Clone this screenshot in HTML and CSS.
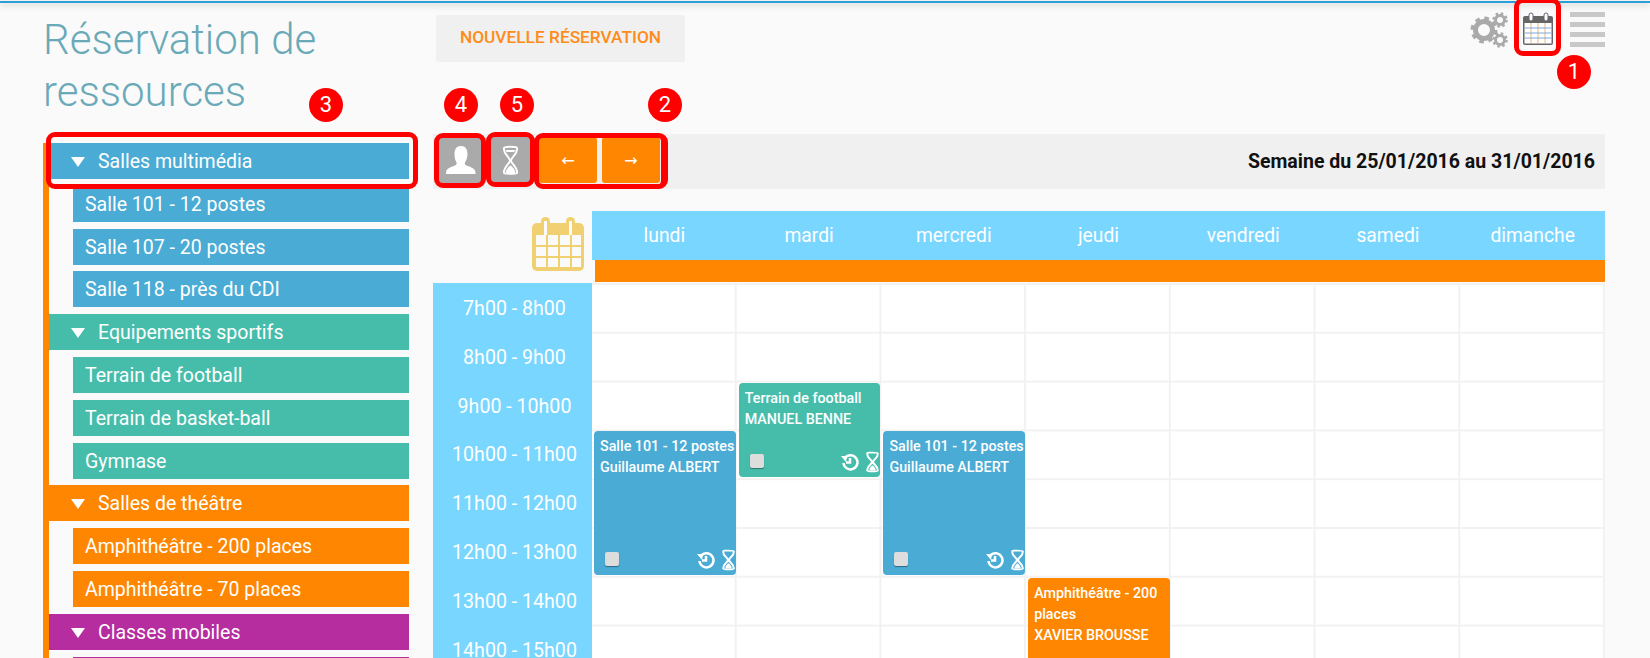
FILE: index.html
```html
<!DOCTYPE html>
<html lang="fr">
<head>
	<meta charset="utf-8">
	<title>Réservation de ressources</title>
	<link rel="stylesheet" href="styles.css">
</head>
<body>
	<div class="topline"></div>
	<div class="page">
		<aside class="side">
			<h1 class="title">Réservation de ressources</h1>
			<ul class="tree">
				<li class="group blue"><span class="tri"></span>Salles multimédia</li>
				<li class="item blue">Salle 101 - 12 postes</li>
				<li class="item blue">Salle 107 - 20 postes</li>
				<li class="item blue">Salle 118 - près du CDI</li>
				<li class="group teal"><span class="tri"></span>Equipements sportifs</li>
				<li class="item teal">Terrain de football</li>
				<li class="item teal">Terrain de basket-ball</li>
				<li class="item teal">Gymnase</li>
				<li class="group orange"><span class="tri"></span>Salles de théâtre</li>
				<li class="item orange">Amphithéâtre - 200 places</li>
				<li class="item orange">Amphithéâtre - 70 places</li>
				<li class="group purple"><span class="tri"></span>Classes mobiles</li>
				<li class="item purple stub"></li>
			</ul>
		</aside>
		<main class="main">
			<div class="top">
				<button class="new">NOUVELLE RÉSERVATION</button>
				<div class="tools">
					<svg class="gears" viewBox="0 0 40 36" width="40" height="36">
						<circle cx="15" cy="18" r="8.5" class="gear-body" stroke-width="5"/>
						<circle cx="15" cy="18" r="11.5" class="gear-teeth" stroke-width="4" stroke-dasharray="4.5 4.53"/>
						<circle cx="31" cy="8" r="4.5" class="gear-body" stroke-width="3"/>
						<circle cx="31" cy="8" r="6.5" class="gear-teeth" stroke-width="2.5" stroke-dasharray="2.5 2.6"/>
						<circle cx="31" cy="28" r="4.5" class="gear-body" stroke-width="3"/>
						<circle cx="31" cy="28" r="6.5" class="gear-teeth" stroke-width="2.5" stroke-dasharray="2.5 2.6"/>
					</svg>
					<svg class="cal-small" viewBox="0 0 32 34" width="32" height="34">
						<rect x="1" y="4" width="30" height="29" rx="2" fill="#666"/>
						<rect x="2.500" y="11" width="27" height="20.500" fill="#fff"/>
						<path d="M9 11v20M16 11v20M23 11v20" stroke="#e8b878" stroke-width="1"/>
						<path d="M3 16h26M3 21h26M3 26h26" stroke="#7fa8d8" stroke-width="1"/>
						<rect x="7" y="1" width="4" height="8" rx="2" fill="#fff" stroke="#667" stroke-width="1"/>
						<rect x="22" y="1" width="4" height="8" rx="2" fill="#fff" stroke="#667" stroke-width="1"/>
					</svg>
					<div class="burger"><span></span><span></span><span></span><span></span></div>
				</div>
			</div>
			<div class="toolbar">
				<button class="btn grey">
					<svg viewBox="0 0 30 28" width="30" height="28"><path fill="#fff" d="M15 0c4.500 0 6.500 3.500 6.500 8 0 3-1 6-2.500 8.500-.6 1 0 2.300 1.500 3 3.500 1.500 7.500 2.500 8.500 5 .4 1 .5 2.200.5 3.500H0c0-1.300.1-2.500.5-3.500 1-2.500 5-3.500 8.500-5 1.500-.7 2.100-2 1.500-3C9 14 8.500 11 8.500 8 8.500 3.500 10.500 0 15 0z"/></svg>
				</button>
				<button class="btn grey">
					<svg viewBox="0 0 20 32" width="19" height="31"><path fill="none" stroke="#fff" stroke-width="2" d="M3 3c0 7 6 9 6.500 13C9 20 3 22 3 29c0 1.500 14 1.500 14 0 0-7-6-9-6.500-13C11 12 17 10 17 3c0-2-14-2-14 0z"/><path fill="#fff" d="M10 21c-2 2-5 4-5 8 0 .7 10 .7 10 0 0-4-3-6-5-8zM5 5h10l-1 2H6z"/></svg>
				</button>
				<button class="btn arrow">←</button>
				<button class="btn arrow">→</button>
				<span class="week">Semaine du 25/01/2016 au 31/01/2016</span>
			</div>
			<div class="cal-head">
				<div class="corner">
					<svg viewBox="0 0 52 55" width="52" height="55">
						<rect x="0" y="7" width="52" height="48" rx="5" fill="#f0d070"/>
						<path fill="#fafafa" d="M4 19h10v10H4zM16 19h10v10H16zM28 19h10v10H28zM40 19h9v10h-9zM4 31h10v9H4zM16 31h10v9H16zM28 31h10v9H28zM40 31h9v9h-9zM4 42h10v9H4zM16 42h10v9H16zM28 42h10v9H28zM40 42h9v9h-9z"/>
						<rect x="9" y="1" width="9" height="15" rx="4.500" fill="#f0d070"/>
						<rect x="34" y="1" width="9" height="15" rx="4.500" fill="#f0d070"/>
						<rect x="12" y="5" width="3" height="14" fill="#fafafa"/>
						<rect x="37" y="5" width="3" height="14" fill="#fafafa"/>
					</svg>
				</div>
				<div class="days">
					<div class="day-names">
						<span>lundi</span><span>mardi</span><span>mercredi</span><span>jeudi</span><span>vendredi</span><span>samedi</span><span>dimanche</span>
					</div>
					<div class="day-bar"></div>
				</div>
			</div>
			<div class="cal-body">
				<div class="hours">
					<div>7h00 - 8h00</div>
					<div>8h00 - 9h00</div>
					<div>9h00 - 10h00</div>
					<div>10h00 - 11h00</div>
					<div>11h00 - 12h00</div>
					<div>12h00 - 13h00</div>
					<div>13h00 - 14h00</div>
					<div>14h00 - 15h00</div>
				</div>
				<div class="slots">
					<div class="event blue ev-mon">
						Salle 101 - 12 postes<br>Guillaume ALBERT
						<span class="check"></span>
						<span class="ev-icons">
							<svg viewBox="0 0 18 18" width="18" height="18"><path fill="none" stroke="#fff" stroke-width="2.500" d="M4 5a7 7 0 1 1-1.500 5M9 5v4.500H5"/><path fill="#fff" d="M0 3l6 0-1 6z"/></svg>
							<svg viewBox="0 0 14 20" width="15" height="22"><path fill="none" stroke="#fff" stroke-width="1.800" d="M2 2c0 5 4 5 4.500 8C6 13 2 13 2 18c0 1 10 1 10 0 0-5-4-5-4.500-8C8 7 12 7 12 2c0-1-10-1-10 0z"/><path fill="#fff" d="M7 13c-1 1-3 2-3 5h6c0-3-2-4-3-5z"/></svg>
						</span>
					</div>
					<div class="event teal ev-tue">
						Terrain de football<br>MANUEL BENNE
						<span class="check"></span>
						<span class="ev-icons">
							<svg viewBox="0 0 18 18" width="18" height="18"><path fill="none" stroke="#fff" stroke-width="2.500" d="M4 5a7 7 0 1 1-1.500 5M9 5v4.500H5"/><path fill="#fff" d="M0 3l6 0-1 6z"/></svg>
							<svg viewBox="0 0 14 20" width="15" height="22"><path fill="none" stroke="#fff" stroke-width="1.800" d="M2 2c0 5 4 5 4.500 8C6 13 2 13 2 18c0 1 10 1 10 0 0-5-4-5-4.500-8C8 7 12 7 12 2c0-1-10-1-10 0z"/><path fill="#fff" d="M7 13c-1 1-3 2-3 5h6c0-3-2-4-3-5z"/></svg>
						</span>
					</div>
					<div class="event blue ev-wed">
						Salle 101 - 12 postes<br>Guillaume ALBERT
						<span class="check"></span>
						<span class="ev-icons">
							<svg viewBox="0 0 18 18" width="18" height="18"><path fill="none" stroke="#fff" stroke-width="2.500" d="M4 5a7 7 0 1 1-1.500 5M9 5v4.500H5"/><path fill="#fff" d="M0 3l6 0-1 6z"/></svg>
							<svg viewBox="0 0 14 20" width="15" height="22"><path fill="none" stroke="#fff" stroke-width="1.800" d="M2 2c0 5 4 5 4.500 8C6 13 2 13 2 18c0 1 10 1 10 0 0-5-4-5-4.500-8C8 7 12 7 12 2c0-1-10-1-10 0z"/><path fill="#fff" d="M7 13c-1 1-3 2-3 5h6c0-3-2-4-3-5z"/></svg>
						</span>
					</div>
					<div class="event orange ev-thu">
						Amphithéâtre - 200 places<br>XAVIER BROUSSE
					</div>
				</div>
			</div>
		</main>
	</div>
	<!-- red marks put on top of the screenshot -->
	<div class="mark mark-a"></div>
	<div class="mark mark-b"></div>
	<div class="mark mark-c"></div>
	<div class="mark mark-d"></div>
	<div class="mark mark-e"></div>
	<div class="badge badge-1">1</div>
	<div class="badge badge-2">2</div>
	<div class="badge badge-3">3</div>
	<div class="badge badge-4">4</div>
	<div class="badge badge-5">5</div>
</body>
</html>
```

FILE: styles.css
```css
html, body {
	margin: 0;
	height: 658px;
	overflow: hidden;
}
body {
	position: relative;
	background: #fafafa;
	font-family: Roboto, "Liberation Sans", sans-serif;
	color: #fff;
}
.topline {
	height: 2px;
	margin-top: 1px;
	background: #2a9fd6;
	box-shadow: 0 2px 6px rgba(0,0,0,0.25);
}
.page {
	display: flex;
	height: 655px;
	overflow: hidden;
	padding-left: 43px;
	padding-right: 45px;
}

/* left column */
.side {
	width: 366px;
	margin-right: 24px;
	flex: none;
}
.title {
	margin: 11px 0 0;
	height: 129px;
	font-size: 42px;
	font-weight: 300;
	line-height: 52px;
	color: #6aa9b8;
}
.tree {
	list-style: none;
	margin: 0;
	padding: 0;
	border-left: 6px solid #ff8600;
}
.tree li {
	height: 36px;
	margin-bottom: 6.800px;
	font-size: 19.500px;
	line-height: 38px;
	white-space: nowrap;
}
.group {
	padding-left: 49px;
	position: relative;
}
.item {
	margin-left: 24px;
	padding-left: 12px;
}
.tri {
	position: absolute;
	left: 22px;
	top: 14px;
	border-left: 7px solid transparent;
	border-right: 7px solid transparent;
	border-top: 10px solid #fff;
}
.blue { background: #4aabd5; }
.teal { background: #46bdab; }
.orange { background: #ff8600; }
.purple { background: #b52d9f; }

/* right column */
.main {
	flex: 1;
	min-width: 0;
}
.top {
	display: flex;
	justify-content: space-between;
	height: 131px;
}
.new {
	margin: 12px 0 0 3px;
	width: 249px;
	height: 47px;
	padding-bottom: 4px;
	border: 0;
	border-radius: 2px;
	background: #f0f0f0;
	color: #ff8c1a;
	font-family: inherit;
	font-size: 17.300px;
	font-weight: 500;
}
.tools {
	display: flex;
	align-items: flex-start;
	padding-top: 9px;
}
.gears { margin-right: 13px; }
.gear-body, .gear-teeth {
	fill: none;
	stroke: #aaa;
}
.cal-small { margin-right: 16px; }
.burger {
	display: flex;
	flex-direction: column;
	gap: 5px;
	width: 35px;
}
.burger span {
	height: 5px;
	background: #c8c8c8;
}
.toolbar {
	display: flex;
	align-items: flex-start;
	height: 55px;
	padding-left: 6px;
	background: #f0f0f0;
}
.btn {
	height: 46px;
	margin-top: 3px;
	padding: 0;
	border: 0;
	border-radius: 3px;
	display: flex;
	align-items: center;
	justify-content: center;
	color: #fff;
	font-size: 16px;
}
.grey {
	width: 43px;
	margin-right: 7px;
	background: #aaa;
}
.arrow {
	width: 58px;
	margin-right: 5px;
	background: #ff8600;
	font-family: "DejaVu Sans", sans-serif;
}
.week {
	margin-left: auto;
	padding-right: 10px;
	color: #111;
	font-size: 19.500px;
	font-weight: 700;
	line-height: 55px;
}

/* calendar */
.cal-head {
	display: flex;
	height: 72px;
	margin-top: 22px;
}
.corner {
	width: 159px;
	flex: none;
	display: flex;
	justify-content: flex-end;
	padding-top: 5px;
	padding-right: 8px;
	box-sizing: border-box;
}
.days { flex: 1; }
.day-names {
	display: flex;
	height: 49px;
	background: #78d6ff;
}
.day-names span {
	flex: 1;
	text-align: center;
	font-size: 19.300px;
	line-height: 49px;
}
.day-bar {
	height: 22px;
	margin-left: 3px;
	background: #ff8600;
}
.cal-body {
	display: flex;
}
.hours {
	width: 159px;
	flex: none;
	box-sizing: border-box;
	padding-left: 4px;
	background: #78d6ff;
}
.hours div {
	height: 48.800px;
	font-size: 19.600px;
	line-height: 51px;
	text-align: center;
}
.slots {
	flex: 1;
	display: grid;
	grid-template-columns: repeat(7, 1fr);
	grid-template-rows: repeat(8, 48.800px);
	background-color: #fff;
	background-image:
		linear-gradient(to right, transparent calc(100% - 2px), #f2f2f2 calc(100% - 2px)),
		linear-gradient(to bottom, transparent calc(100% - 2px), #f2f2f2 calc(100% - 2px));
	background-position: 0 2px;
	background-size: 144.710px 48.800px;
}
.event {
	position: relative;
	margin: 2px 1px 1px 2px;
	padding: 5px 0 0 6px;
	border-radius: 4px;
	font-size: 14.300px;
	font-weight: 500;
	line-height: 21px;
	overflow: hidden;
}
.ev-mon { grid-column: 1; grid-row: 4 / span 3; }
.ev-tue { grid-column: 2; grid-row: 3 / span 2; }
.ev-wed { grid-column: 3; grid-row: 4 / span 3; }
.ev-thu { grid-column: 4; grid-row: 7 / span 2; }
.check {
	position: absolute;
	left: 11px;
	bottom: 9px;
	width: 14px;
	height: 14px;
	border-radius: 2px;
	background: #ddd;
	box-shadow: 0 1px 1px rgba(0,0,0,0.4);
}
.ev-icons {
	position: absolute;
	right: 0;
	bottom: 4px;
	display: flex;
	align-items: center;
	gap: 6px;
}

/* annotations */
.mark {
	position: absolute;
	box-sizing: border-box;
	border: 5px solid #f00;
	border-radius: 9px;
}
.mark-a { left: 1514px; top: -2px; width: 47px; height: 58px; }
.mark-b { left: 534px; top: 133px; width: 134px; height: 56px; border-right-width: 7px; }
.mark-c { left: 46px; top: 132px; width: 372px; height: 57px; }
.mark-d { left: 434px; top: 133px; width: 52px; height: 55px; }
.mark-e { left: 486px; top: 132px; width: 49px; height: 55px; }
.badge {
	position: absolute;
	width: 34px;
	height: 34px;
	border-radius: 50%;
	background: #f00;
	font-size: 22px;
	line-height: 34px;
	text-align: center;
}
.badge-1 { left: 1557px; top: 55px; }
.badge-2 { left: 648px; top: 88px; }
.badge-3 { left: 309px; top: 88px; }
.badge-4 { left: 444px; top: 88px; }
.badge-5 { left: 500px; top: 88px; }
```
